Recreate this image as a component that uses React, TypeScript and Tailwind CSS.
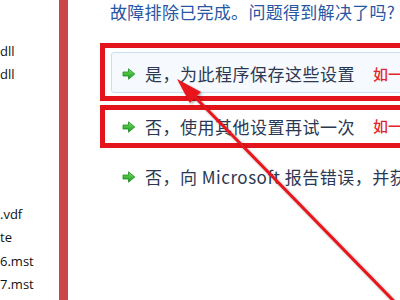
import React from "react";

const CJK = { fontFamily: '"Noto Sans CJK SC", "Noto Sans", sans-serif' };

const files = ["dll", "dll", "", "", "", "", "", ".vdf", "te", "6.mst", "7.mst"];

function GreenArrow() {
  return (
    <svg width="14" height="12" viewBox="0 0 14 12" className="shrink-0">
      <defs>
        <linearGradient id="ga" x1="0" y1="0" x2="0" y2="1">
          <stop offset="0" stopColor="#7ee05a" />
          <stop offset="1" stopColor="#139a1f" />
        </linearGradient>
      </defs>
      <path
        d="M1 4 H6.5 V0.8 L12.8 6 L6.5 11.2 V8 H1 Z"
        fill="url(#ga)"
        stroke="#1b8a22"
        strokeWidth="0.8"
        strokeLinejoin="round"
      />
    </svg>
  );
}

function Option({ text, note }: { text: string; note?: string }) {
  return (
    <div className="flex items-center whitespace-nowrap">
      <GreenArrow />
      <span className="ml-[9px] text-[17px] tracking-[0.5px] text-[#2b3852]">{text}</span>
      {note && (
        <span className="ml-[18px] text-[15px] font-medium text-[#e3242b]">{note}</span>
      )}
    </div>
  );
}

export default function App() {
  return (
    <div className="relative flex h-[300px] w-[400px] overflow-hidden bg-white" style={CJK}>
      {/* file list pane, scrolled so names are cut on the left */}
      <div
        className="w-[59px] shrink-0 overflow-hidden pt-[40px] text-[13px] leading-[23.3px] text-[#111111]"
        style={{ fontFamily: '"Open Sans", "Noto Sans", sans-serif' }}
      >
        {files.map((f, i) => (
          <div key={i} className="h-[23.3px] whitespace-nowrap">
            {f}
          </div>
        ))}
      </div>
      <div className="w-[9px] shrink-0 bg-[#c94747]" />

      {/* troubleshooter dialog */}
      <div className="min-w-0 flex-1 overflow-hidden pl-[32px]">
        <div className="ml-[10px] whitespace-nowrap text-[17px] leading-[24px] tracking-[0.3px] text-[#2757a3]">
          故障排除已完成。问题得到解决了吗?
        </div>

        <div className="mt-[19px] h-[58px] w-[330px] border-[5px] border-[#e3141b] pl-[6px] pt-[4px]">
          <div className="flex h-[41px] items-center rounded-[3px] border border-[#c9def3] bg-[#f6fafe] pl-[10px] pt-[3px]">
            <Option text="是，为此程序保存这些设置" note="如一" />
          </div>
        </div>

        <div className="mt-[4px] flex h-[43px] w-[330px] items-center border-[5px] border-[#e3141b] pl-[17px]">
          <Option text="否，使用其他设置再试一次" note="如一" />
        </div>

        <div className="mt-[18px] flex h-[22px] items-center pl-[22px]">
          <Option text="否，向 Microsoft 报告错误，并获取更多信息" />
        </div>
      </div>

      {/* red annotation arrow */}
      <svg
        className="pointer-events-none absolute inset-0"
        width="400"
        height="300"
        viewBox="0 0 400 300"
      >
        <defs>
          <filter id="sh" x="-20%" y="-20%" width="140%" height="140%">
            <feDropShadow dx="1.5" dy="1.5" stdDeviation="1" floodColor="#000" floodOpacity="0.35" />
          </filter>
        </defs>
        <g filter="url(#sh)">
          <line x1="194" y1="96" x2="422" y2="330" stroke="#e8141a" strokeWidth="3" />
          <polygon points="177,79 189.8,103 201,92" fill="#e8141a" />
        </g>
      </svg>
    </div>
  );
}
